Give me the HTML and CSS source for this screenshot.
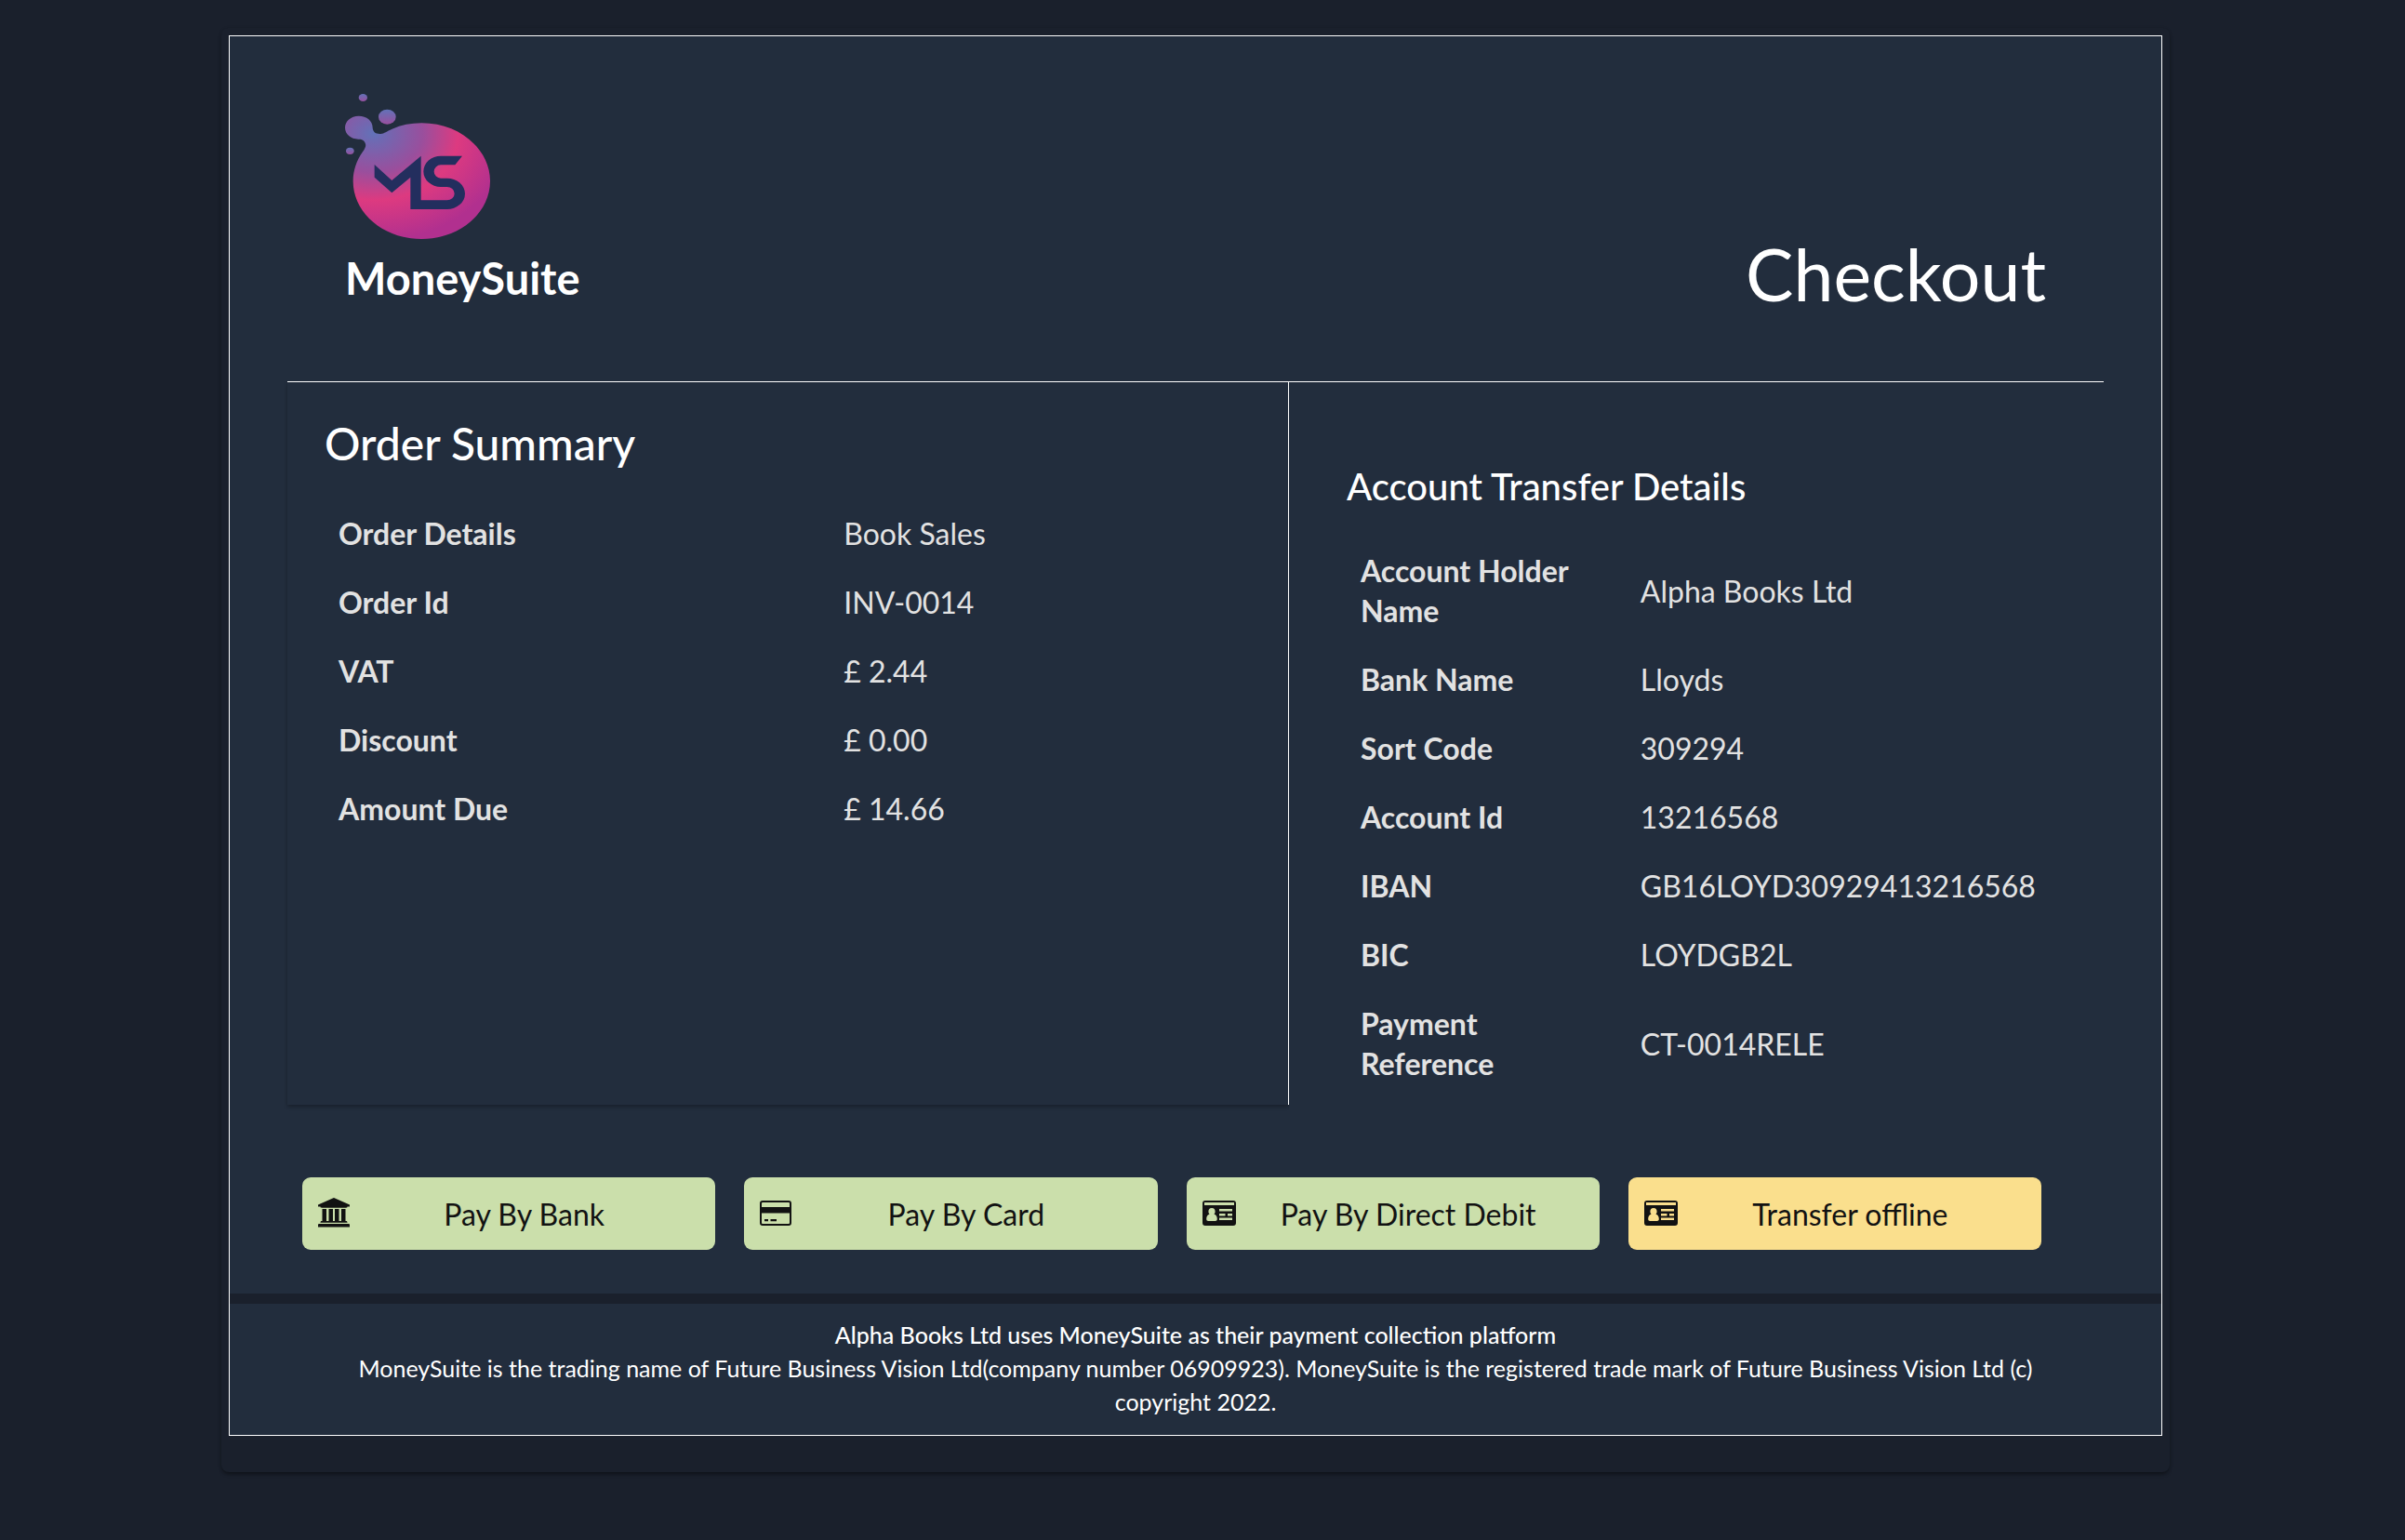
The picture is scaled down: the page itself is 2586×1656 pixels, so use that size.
FILE: index.html
```
<!DOCTYPE html>
<html lang="en">
<head>
<meta charset="utf-8">
<meta name="viewport" content="width=device-width, initial-scale=1">
<title>Checkout</title>
<link rel="stylesheet" href="styles.css">
</head>
<body>
<svg class="sprite" aria-hidden="true">
  <symbol id="icon-id" viewBox="0 0 36 28">
    <path fill-rule="evenodd" d="M3 0h30a3 3 0 0 1 3 3v21a3 3 0 0 1-3 3H3a3 3 0 0 1-3-3V3a3 3 0 0 1 3-3zM2 2v3h32V2zM10 8c-2.400 0-3.600 1.700-3.600 3.700 0 1.400.5 2.300 1.200 3C5.300 15 4.200 17 4.200 20c0 1.200.8 2 2 2h7.600c1.200 0 2-.8 2-2 0-3-1.100-5-3.400-5.300.7-.7 1.200-1.600 1.200-3C13.600 9.700 12.400 8 10 8zM18 9v2.400h14V9zM18 14v2.400h6.500V14zM27 14v2.400h5V14zM18 18.500v2.400h14v-2.400z"/>
  </symbol>
</svg>
<main class="sheet">
  <article class="card">
    <header class="header">
      <div class="brand">
        <svg class="logo" viewBox="63 63 468 468" aria-hidden="true">
          <defs>
            <radialGradient id="blob" gradientUnits="userSpaceOnUse" cx="0" cy="0" r="440" gradientTransform="translate(155 190) scale(1 .79)">
              <stop offset="0" stop-color="#6272b8"/>
              <stop offset=".08" stop-color="#6f69b2"/>
              <stop offset=".36" stop-color="#994f9d"/>
              <stop offset=".62" stop-color="#dd3a80"/>
              <stop offset="1" stop-color="#b1308f"/>
            </radialGradient>
            <linearGradient id="drop" x1="0" y1="0" x2="0" y2="1">
              <stop offset="0" stop-color="#6272b8"/>
              <stop offset="1" stop-color="#98509e"/>
            </linearGradient>
          </defs>
          <path fill="url(#blob)" d="M310 157C432 157 531 241 531 344S432 531 310 531 89 447 89 344C89 310 100 278 120 250C128 238 131 232 129 224C127 214 117 208 106 209C82 209 63 193 63 172C63 151 82 134 107 134C133 134 152 150 152 172C153 188 164 193 178 192C190 191 197 183 215 176C244 163 276 157 310 157Z"/>
          <ellipse fill="url(#drop)" cx="121" cy="75" rx="14" ry="12"/>
          <ellipse fill="url(#drop)" cx="199" cy="137" rx="28" ry="24"/>
          <ellipse fill="url(#drop)" cx="79" cy="247" rx="13" ry="11"/>
          <path fill="#232e5e" d="M158 291L214 342L308 263V406H392A24 21.500 0 0 0 392 363H372A56 50 0 0 1 372 263H441L418 292H372A22 21.500 0 0 0 372 335H392A58 50 0 0 1 392 435H274V332L214 382L158 332Z"/>
        </svg>
        <p class="brand-name">MoneySuite</p>
      </div>
      <h1 class="title">Checkout</h1>
    </header>

    <div class="columns">
      <section class="summary">
        <h2 class="summary-title">Order Summary</h2>
        <table class="details">
          <tbody>
            <tr><th scope="row">Order Details</th><td>Book Sales</td></tr>
            <tr><th scope="row">Order Id</th><td>INV-0014</td></tr>
            <tr><th scope="row">VAT</th><td>£ 2.44</td></tr>
            <tr><th scope="row">Discount</th><td>£ 0.00</td></tr>
            <tr><th scope="row">Amount Due</th><td>£ 14.66</td></tr>
          </tbody>
        </table>
      </section>
      <section class="transfer">
        <h2 class="transfer-title">Account Transfer Details</h2>
        <table class="details">
          <tbody>
            <tr><th scope="row">Account Holder Name</th><td>Alpha Books Ltd</td></tr>
            <tr><th scope="row">Bank Name</th><td>Lloyds</td></tr>
            <tr><th scope="row">Sort Code</th><td>309294</td></tr>
            <tr><th scope="row">Account Id</th><td>13216568</td></tr>
            <tr><th scope="row">IBAN</th><td>GB16LOYD30929413216568</td></tr>
            <tr><th scope="row">BIC</th><td>LOYDGB2L</td></tr>
            <tr><th scope="row">Payment Reference</th><td>CT-0014RELE</td></tr>
          </tbody>
        </table>
      </section>
    </div>

    <div class="actions">
      <button class="pay" type="button">
        <svg class="icon" viewBox="0 0 36 34" aria-hidden="true"><path d="M17 0L34 7.500V9.500H31.500C31.500 10.300 31 10.700 30.200 10.700H3.800C3 10.700 2.500 10.300 2.500 9.500H0V7.500ZM4.500 12H9V25H11.500V12H16V25H18V12H22.500V25H25V12H29.500V25H30.200C31 25 31.500 25.500 31.500 26.800H2.500C2.500 25.500 3 25 3.800 25H4.500ZM1.300 28H32.700C33.500 28 34 28.500 34 29.300V31.500H0V29.300C0 28.500.5 28 1.300 28Z"/></svg>
        <span class="label">Pay By Bank</span>
      </button>
      <button class="pay" type="button">
        <svg class="icon" viewBox="0 0 36 28" aria-hidden="true"><path fill-rule="evenodd" d="M3 0H31A3 3 0 0 1 34 3V24A3 3 0 0 1 31 27H3A3 3 0 0 1 0 24V3A3 3 0 0 1 3 0ZM3 2Q2 2 2 3V7H32V3Q32 2 31 2ZM2 13.500V24Q2 25 3 25H31Q32 25 32 24V13.500ZM5 20H9V22.300H5ZM11.500 20H18V22.300H11.500Z"/></svg>
        <span class="label">Pay By Card</span>
      </button>
      <button class="pay" type="button">
        <svg class="icon" viewBox="0 0 36 28" aria-hidden="true"><use href="#icon-id"/></svg>
        <span class="label">Pay By Direct Debit</span>
      </button>
      <button class="pay offline" type="button">
        <svg class="icon" viewBox="0 0 36 28" aria-hidden="true"><use href="#icon-id"/></svg>
        <span class="label">Transfer offline</span>
      </button>
    </div>

    <footer class="footer">
      <p class="notice">Alpha Books Ltd uses MoneySuite as their payment collection platform</p>
      <p>MoneySuite is the trading name of Future Business Vision Ltd(company number 06909923). MoneySuite is the registered trade mark of Future Business Vision Ltd (c) copyright 2022.</p>
    </footer>
  </article>
</main>
</body>
</html>
```
FILE: styles.css
```
* {
  box-sizing: border-box;
}

body {
  margin: 0;
  padding: 30px 16px 72px 0;
  background: #1a202c;
  color: #fff;
  font: 400 32px/43px Lato, "Liberation Sans", sans-serif;
}

h1,
h2,
p {
  margin: 0;
}

.sprite {
  display: none;
}

.sheet {
  margin: 0 237px 0 238px;
  padding: 8px 8px 39px;
  border-radius: 8px;
  box-shadow: 0 3px 4px -1px rgba(0, 0, 0, .4), 0 1px 4px rgba(0, 0, 0, .12);
}

.card {
  border: 1px solid #fff;
  background: #222d3d;
}

.header {
  display: flex;
  justify-content: space-between;
  align-items: flex-end;
  margin: 0 62px;
  padding: 62px 62px 70px;
  border-bottom: 1px solid #fff;
}

.brand {
  display: grid;
  gap: 12px;
  padding-bottom: 11px;
}

.logo {
  width: 156px;
  height: 156px;
}

.brand-name {
  font-size: 47px;
  font-weight: 700;
  line-height: 60px;
}

.title {
  font-size: 77px;
  font-weight: 400;
  line-height: 92px;
}

.columns {
  display: grid;
  grid-template-columns: 1077fr 876fr;
  margin: 0 62px;
}

.summary {
  padding: 37px 30px 8px 40px;
  border-right: 1px solid #fff;
  box-shadow: 0 2px 4px rgba(0, 0, 0, .3);
  clip-path: inset(0 0 -8px -4px);
}

.summary-title {
  margin-bottom: 30px;
  font-size: 48px;
  font-weight: 500;
  line-height: 58px;
}

.transfer {
  padding: 88px 62px 8px;
}

.transfer-title {
  margin-bottom: 29px;
  font-size: 40px;
  font-weight: 500;
  line-height: 48px;
}

.details {
  width: 100%;
  border-collapse: collapse;
  table-layout: fixed;
  color: #e2e2e2;
}

.details th,
.details td {
  padding: 16px 15px 15px;
  text-align: left;
  vertical-align: middle;
}

.details th {
  width: 40%;
  font-weight: 700;
}

.summary .details th {
  width: 54%;
}

.actions {
  display: grid;
  grid-template-columns: repeat(4, 1fr);
  gap: 31px;
  padding: 78px 129px 47px 78px;
  border-bottom: 11px solid #1a202c;
}

.pay {
  display: flex;
  align-items: center;
  height: 78px;
  padding: 0 20px 0 17px;
  border: 0;
  border-radius: 9px;
  background: #cbdfab;
  color: #121212;
  font: inherit;
  cursor: pointer;
}

.offline {
  background: #fadf8d;
}

.icon {
  width: 36px;
  fill: currentColor;
}

.label {
  flex: 1;
  text-align: center;
}

.footer {
  padding: 15px 124px 18px;
  font-size: 25px;
  line-height: 36px;
  text-align: center;
}

.notice {
  font-weight: 500;
}
```
